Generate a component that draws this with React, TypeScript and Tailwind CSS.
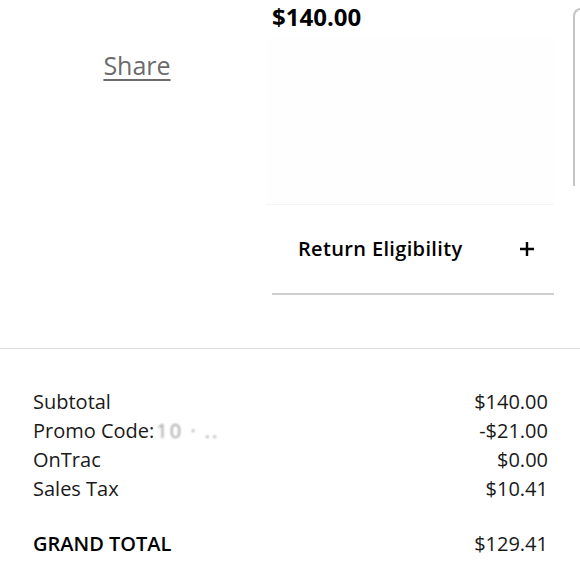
import React from "react";

const rows = [
  { label: "Subtotal", value: "$140.00" },
  { label: "Promo Code:", value: "-$21.00", code: true },
  { label: "OnTrac", value: "$0.00" },
  { label: "Sales Tax", value: "$10.41" },
];

function PlusIcon() {
  return (
    <svg width="16" height="16" viewBox="0 0 16 16" className="text-black">
      <path d="M8 1v14M1 8h14" stroke="currentColor" strokeWidth="2.4" />
    </svg>
  );
}

export default function App() {
  return (
    <div className="w-[580px] h-[580px] overflow-hidden bg-white text-black font-['Open_Sans',sans-serif]">
      {/* product area */}
      <div className="flex h-[349px] border-b border-[#dedede]">
        <div className="w-[272px] shrink-0 flex justify-center pt-[49px]">
          <a className="text-[25px] leading-[32px] text-[#6b6b6b] underline underline-offset-[4px] decoration-[2px] pl-[2px]">
            Share
          </a>
        </div>

        <div className="w-[282px] shrink-0">
          <div className="h-[38px] text-[24px] leading-[33px] font-bold">$140.00</div>
          <div className="h-[167px] -ml-[6px] bg-[#fefefe] border-b border-[#f4f4f4]" />
          <div className="h-[90px] flex items-center justify-between pl-[26px] pr-[19px] border-b-2 border-[#cfcfcf]">
            <span className="text-[20px] font-semibold tracking-[0.35px]">Return Eligibility</span>
            <PlusIcon />
          </div>
        </div>

        <div className="ml-[19px] mt-[8px] h-[178px] w-[40px] shrink-0 border-l-2 border-t-2 border-[#c4c4c4] rounded-tl-[8px]" />
      </div>

      {/* order summary */}
      <div className="pt-[38px] pl-[33px] pr-[32px]">
        {rows.map((r) => (
          <div key={r.label} className="flex justify-between text-[20px] leading-[29px] text-[#1a1a1a]">
            <span className="flex">
              {r.label}
              {r.code && (
                <span className="ml-[2px] text-[#9a9a9a] blur-[1px] tracking-[2px]">10 · ..</span>
              )}
            </span>
            <span>{r.value}</span>
          </div>
        ))}
        <div className="flex justify-between mt-[26px] text-[20px] leading-[29px]">
          <span className="font-semibold">GRAND TOTAL</span>
          <span className="text-[#1a1a1a]">$129.41</span>
        </div>
      </div>
    </div>
  );
}
